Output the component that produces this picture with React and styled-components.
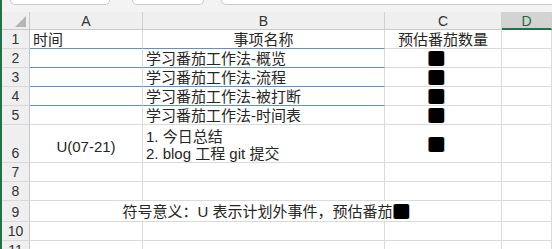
import React from 'react';
import styled, { createGlobalStyle } from 'styled-components';

const GlobalStyle = createGlobalStyle`
  html, body { margin: 0; padding: 0; background: #ffffff; overflow: hidden; }
  body { font-family: "Liberation Sans", "Noto Sans CJK SC", sans-serif; color: #262626; }
  * { box-sizing: border-box; }
`;

const Page = styled.div`
  width: 552px;
  height: 249px;
  overflow: hidden;
  border-left: 2px solid #217346;
  background: #ffffff;
`;

const TopStrip = styled.div`
  height: 12px;
  background: #f3f3f3;
  display: flex;
  align-items: flex-start;
  padding-left: 8px;
  gap: 20px;
`;

const Tab = styled.div`
  height: 5px;
  width: ${p => (p.$width ? `${p.$width}px` : 'auto')};
  flex: ${p => (p.$grow ? 1 : 'none')};
  margin-left: ${p => p.$ml || 0}px;
  margin-right: ${p => p.$mr || 0}px;
  background: #ffffff;
  border: 1px solid #c9c9c9;
  border-top: none;
  border-radius: 0 0 5px 5px;
`;

const Sheet = styled.div`
  display: grid;
  grid-template-columns: 28px 113px 242px 117px 1fr;
  grid-template-rows: 18px 19px 19px 19px 19px 19px 38px 19px 19px 21px 19px 19px;
  font-size: 15px;
`;

const Corner = styled.div`
  background: #efefef;
  border-right: 1px solid #c8c8c8;
  border-bottom: 1px solid #c8c8c8;
  display: flex;
  align-items: flex-end;
  justify-content: flex-end;
  padding: 0 3px 2px 0;
`;

const ColHeader = styled.div`
  background: ${p => (p.$selected ? '#d3d3d3' : '#efefef')};
  border-right: 1px solid #d0d0d0;
  border-bottom: ${p => (p.$selected ? '2px solid #217346' : '1px solid #c8c8c8')};
  color: ${p => (p.$selected ? '#1f6b40' : '#333333')};
  font-size: 14px;
  display: flex;
  align-items: center;
  justify-content: center;
  line-height: 16px;
  padding-top: ${p => (p.$selected ? 1 : 0)}px;
`;

const RowHeader = styled.div`
  background: #efefef;
  border-right: 1px solid #c6c6c6;
  border-bottom: 1px solid #d9d9d9;
  color: #333333;
  font-size: 14px;
  display: flex;
  align-items: flex-end;
  justify-content: center;
  line-height: 16px;
  padding-bottom: 1px;
`;

const Cell = styled.div`
  grid-column: ${p => (p.$span ? `span ${p.$span}` : 'auto')};
  border-right: 1px solid #dadada;
  border-bottom: 1px solid ${p => (p.$blue ? '#5b93cf' : '#dadada')};
  display: flex;
  flex-direction: column;
  justify-content: ${p => (p.$valign === 'center' ? 'center' : 'flex-end')};
  align-items: ${p => (p.$align === 'center' ? 'center' : 'flex-start')};
  padding: ${p => p.$pt || 0}px 3px ${p => (p.$pb === undefined ? 0 : p.$pb)}px 3px;
  line-height: 17px;
  white-space: nowrap;
  overflow: visible;
`;

const Line = styled.span`
  display: block;
`;

const Square = styled.span`
  display: inline-block;
  width: 15px;
  height: 15px;
  background: #000000;
  border-radius: 2px;
  box-shadow: -1px 0 0 #b8741c, 1px 0 0 #7fc8f0;
  margin-right: ${p => p.$mr || 0}px;
  margin-left: ${p => p.$ml || 0}px;
  vertical-align: ${p => p.$va || 'middle'};
`;

const SquareCell = styled.div`
  display: flex;
  padding-right: 14px;
`;

const CornerTriangle = () => (
  <svg width="11" height="11" viewBox="0 0 11 11">
    <polygon points="11,0 11,11 0,11" fill="#b5b5b5" />
  </svg>
);

const rows = [
  { n: 1, a: '时间', b: '事项名称', bAlign: 'center', c: '预估番茄数量', blue: true },
  { n: 2, b: '学习番茄工作法-概览', sq: true, blue: true },
  { n: 3, b: '学习番茄工作法-流程', sq: true, blue: true },
  { n: 4, b: '学习番茄工作法-被打断', sq: true, blue: true },
  { n: 5, b: '学习番茄工作法-时间表', sq: true },
];

export default function App() {
  return (
    <>
      <GlobalStyle />
      <Page>
        <TopStrip>
          <Tab $width={100} />
          <Tab $width={72} $ml={2} />
          <Tab $grow $ml={-3} $mr={-8} />
        </TopStrip>
        <Sheet>
          <Corner><CornerTriangle /></Corner>
          <ColHeader>A</ColHeader>
          <ColHeader>B</ColHeader>
          <ColHeader>C</ColHeader>
          <ColHeader $selected>D</ColHeader>

          {rows.map(r => (
            <React.Fragment key={r.n}>
              <RowHeader>{r.n}</RowHeader>
              <Cell $blue={r.blue}>{r.a || ''}</Cell>
              <Cell $blue={r.blue} $align={r.bAlign}>{r.b}</Cell>
              <Cell $align="center" $pb={r.sq ? 1 : 0}>
                {r.sq ? (
                  <SquareCell><Square /></SquareCell>
                ) : (
                  r.c || ''
                )}
              </Cell>
              <Cell />
            </React.Fragment>
          ))}

          <RowHeader>6</RowHeader>
          <Cell $align="center" $valign="center" $pt={6}>U(07-21)</Cell>
          <Cell>
            <Line>1. 今日总结</Line>
            <Line>2. blog 工程 git 提交</Line>
          </Cell>
          <Cell $align="center" $valign="center" $pt={2}>
            <SquareCell><Square /></SquareCell>
          </Cell>
          <Cell />

          <RowHeader>7</RowHeader>
          <Cell /><Cell /><Cell /><Cell />

          <RowHeader>8</RowHeader>
          <Cell /><Cell /><Cell /><Cell />

          <RowHeader>9</RowHeader>
          <Cell $span={3} $align="center" $pb={1}>
            <span>符号意义：U 表示计划外事件，预估番茄<Square $ml={1} $va="-2px" /></span>
          </Cell>
          <Cell />

          <RowHeader>10</RowHeader>
          <Cell /><Cell /><Cell /><Cell />

          <RowHeader>11</RowHeader>
          <Cell /><Cell /><Cell /><Cell />
        </Sheet>
      </Page>
    </>
  );
}
